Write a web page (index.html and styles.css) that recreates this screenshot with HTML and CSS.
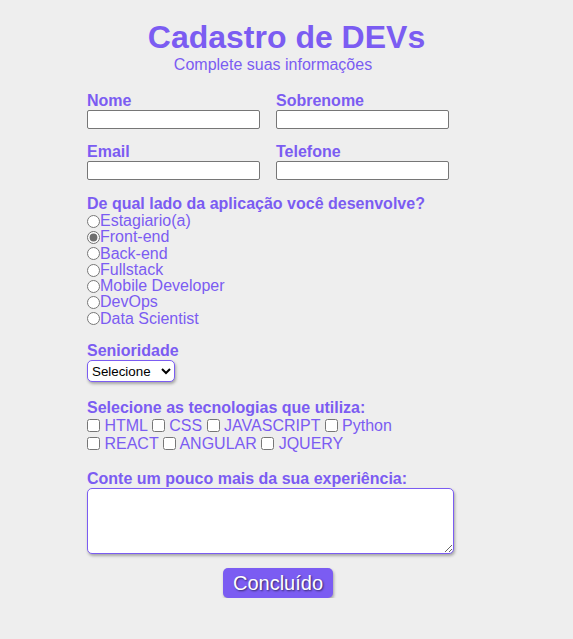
FILE: index.html
```html
<!DOCTYPE html>
<html lang="pt-BR">
<head>
<meta charset="utf-8">
<title>Cadastro de DEVs</title>
<link rel="stylesheet" href="styles.css">
</head>
<body>
<main class="page">
  <header class="head">
    <h1 class="title">Cadastro de DEVs</h1>
    <p class="subtitle">Complete suas informações</p>
  </header>
  <form class="form">
    <div class="pair">
      <div class="field">
        <label class="lbl" for="nome">Nome</label>
        <input class="txt" id="nome" type="text">
      </div>
      <div class="field">
        <label class="lbl" for="sobrenome">Sobrenome</label>
        <input class="txt" id="sobrenome" type="text">
      </div>
    </div>
    <div class="pair pair2">
      <div class="field">
        <label class="lbl" for="email">Email</label>
        <input class="txt" id="email" type="text">
      </div>
      <div class="field">
        <label class="lbl" for="tel">Telefone</label>
        <input class="txt" id="tel" type="text">
      </div>
    </div>

    <div class="group radios">
      <div class="lbl">De qual lado da aplicação você desenvolve?</div>
      <label class="opt"><input type="radio" name="lado">Estagiario(a)</label>
      <label class="opt"><input type="radio" name="lado" checked>Front-end</label>
      <label class="opt"><input type="radio" name="lado">Back-end</label>
      <label class="opt"><input type="radio" name="lado">Fullstack</label>
      <label class="opt"><input type="radio" name="lado">Mobile Developer</label>
      <label class="opt"><input type="radio" name="lado">DevOps</label>
      <label class="opt"><input type="radio" name="lado">Data Scientist</label>
    </div>

    <div class="group senior">
      <label class="lbl" for="sen">Senioridade</label>
      <select class="sel" id="sen">
        <option>Selecione</option>
        <option>Júnior</option>
        <option>Pleno</option>
        <option>Sênior</option>
      </select>
    </div>

    <div class="group techs">
      <div class="lbl">Selecione as tecnologias que utiliza:</div>
      <div class="checks">
        <label class="chk"><input type="checkbox"> HTML</label>
        <label class="chk"><input type="checkbox"> CSS</label>
        <label class="chk"><input type="checkbox"> JAVASCRIPT</label>
        <label class="chk"><input type="checkbox"> Python</label>
        <label class="chk"><input type="checkbox"> REACT</label>
        <label class="chk"><input type="checkbox"> ANGULAR</label>
        <label class="chk"><input type="checkbox"> JQUERY</label>
      </div>
    </div>

    <div class="group exp">
      <label class="lbl" for="exp">Conte um pouco mais da sua experiência:</label>
      <textarea class="area" id="exp"></textarea>
    </div>

    <div class="actions">
      <button class="btn" type="button">Concluído</button>
    </div>
  </form>
</main>
</body>
</html>
```
FILE: styles.css
```css
html, body {
  margin: 0;
  padding: 0;
  background: #eeeeee;
}
body {
  font-family: "Liberation Sans", Arial, sans-serif;
  color: #7b5cf2;
}
.page {
  width: 573px;
}
.head {
  display: flex;
  flex-direction: column;
  align-items: center;
}
.title {
  margin: 19px 0 0;
  font-size: 32px;
  line-height: 37px;
  font-weight: bold;
  color: #7b5cf2;
}
.subtitle {
  margin: 0 0 0 -27px;
  font-size: 16px;
  line-height: 18px;
  color: #7b5cf2;
}
.form {
  margin: 18px 0 0 87px;
  width: 373px;
}
.pair {
  display: flex;
  gap: 16px;
}
.pair2 {
  margin-top: 14px;
}
.field {
  display: flex;
  flex-direction: column;
}
.lbl {
  display: block;
  font-size: 16px;
  line-height: 18px;
  font-weight: bold;
  color: #7b5cf2;
}
.txt {
  box-sizing: border-box;
  width: 173px;
  height: 19px;
  margin: 0;
  border: 1px solid #767676;
  border-radius: 2px;
  background: #fff;
}
.group {
  margin-top: 15px;
}
.radios .opt {
  display: flex;
  align-items: center;
  font-size: 16px;
  line-height: 16.3px;
  color: #7b5cf2;
}
.radios .opt input {
  width: 13px;
  height: 13px;
  margin: 0;
  accent-color: #6e6e6e;
}
.senior {
  margin-top: 15px;
}
.sel {
  box-sizing: border-box;
  width: 88px;
  height: 22px;
  margin-top: 0;
  font-family: Arial, "Liberation Sans", sans-serif;
  font-size: 13.33px;
  color: #000;
  background: #fff;
  border: 1px solid #7b5cf2;
  border-radius: 5px;
  box-shadow: 1px 2px 3px rgba(0, 0, 0, 0.3);
}
.techs {
  margin-top: 17px;
}
.checks {
  width: 320px;
  font-size: 16px;
  line-height: 18px;
}
.chk input {
  width: 13px;
  height: 13px;
  margin: 0 0 0 0;
  vertical-align: -1px;
}
.exp {
  margin-top: 17px;
}
.area {
  display: block;
  box-sizing: border-box;
  width: 367px;
  height: 66px;
  margin: 0;
  border: 1px solid #7b5cf2;
  border-radius: 5px;
  background: #fff;
  box-shadow: 1px 2px 3px rgba(0, 0, 0, 0.3);
  resize: both;
}
.actions {
  display: flex;
  padding-left: 136px;
  margin-top: 14px;
}
.btn {
  box-sizing: border-box;
  width: 110px;
  height: 30px;
  border: none;
  border-radius: 5px;
  background: #7b5cf2;
  color: #fff;
  font-family: "Liberation Sans", Arial, sans-serif;
  font-size: 20px;
  text-shadow: 1px 1px 2px rgba(0, 0, 0, 0.6);
  box-shadow: 1px 2px 3px rgba(0, 0, 0, 0.3);
  padding: 0;
}
```
